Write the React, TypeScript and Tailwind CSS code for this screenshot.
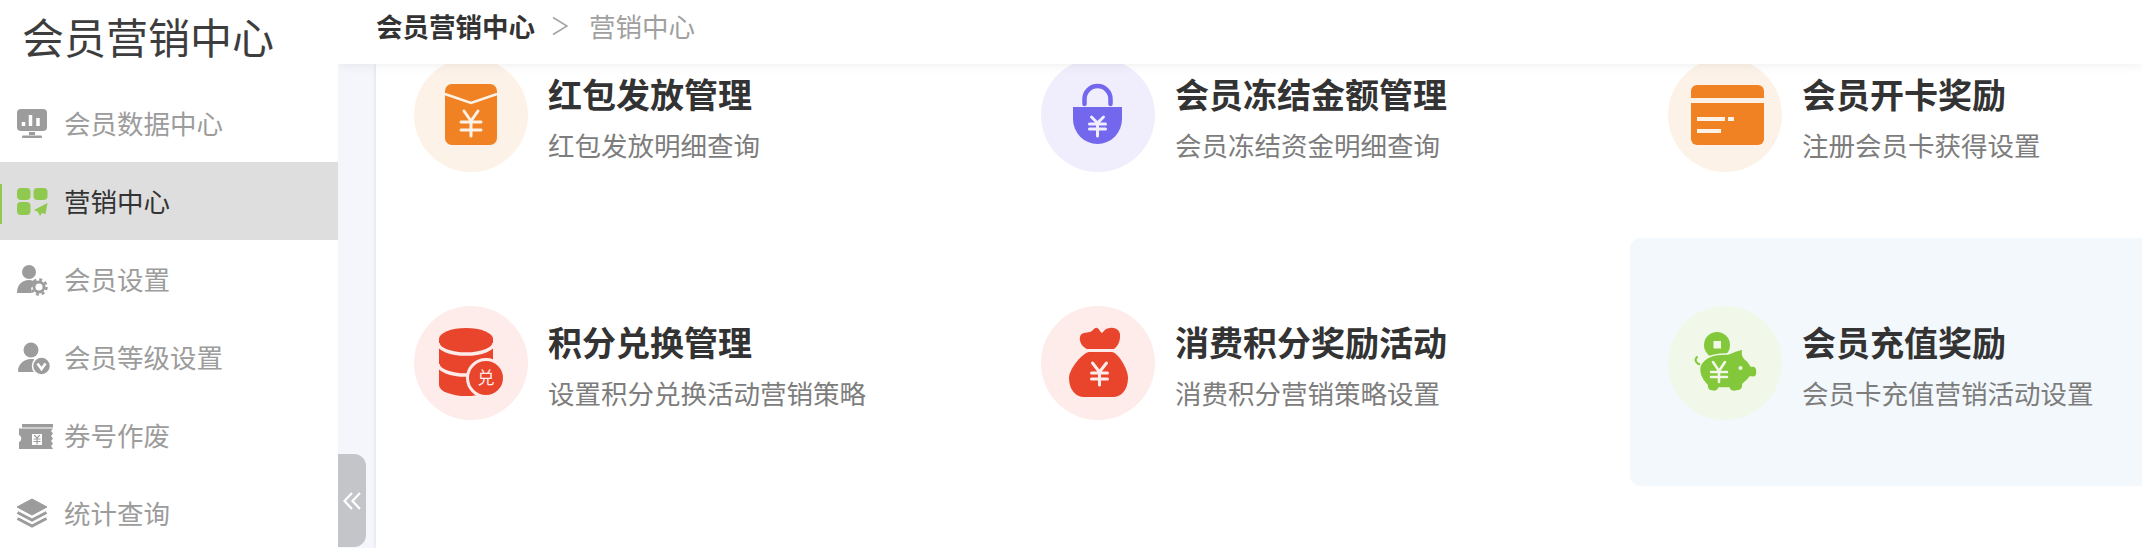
import type { ReactNode } from 'react';

const CJK = "font-['Noto_Sans_CJK_SC','Noto_Sans',sans-serif]";

interface YenProps {
	cx: number;
	top: number;
	bar1: number;
	bar2: number;
	bottom: number;
	half: number;
	arm?: number;
	color?: string;
	width?: number;
}

const Yen = ({ cx, top, bar1, bar2, bottom, half, arm = half - 1, color = '#fff', width = 3 }: YenProps) => (
	<path
		d={`M${cx - arm} ${top}L${cx} ${bar1 - 1}L${cx + arm} ${top}M${cx} ${bar1 - 1}V${bottom}M${cx - half} ${bar1}H${cx + half}M${cx - half} ${bar2}H${cx + half}`}
		fill="none"
		stroke={color}
		strokeLinecap="round"
		strokeWidth={width}
	/>
);

const IconFrame = ({ children }: { children: ReactNode }) => (
	<svg className="absolute inset-0" fill="none" height={114} viewBox="0 0 114 114" width={114}>
		{children}
	</svg>
);

const EnvelopeIcon = () => (
	<IconFrame>
		<rect fill="#f08224" height={61} rx={7} width={52} x={31} y={26} />
		<path d="M31 36L57 45L83 36" stroke="#fdf2e7" strokeWidth={2.5} />
		<Yen bar1={64} bar2={72} bottom={78} cx={57} half={10} arm={7} top={53} color="#fdf2e7" />
	</IconFrame>
);

const LockIcon = () => (
	<IconFrame>
		<path d="M43.5 46V41a13 13 0 0 1 26 0V46" stroke="#7367ee" strokeLinecap="round" strokeWidth={4.5} />
		<path d="M32 49H81V61a24.5 25 0 0 1-49 0Z" fill="#7367ee" />
		<Yen bar1={66} bar2={71} bottom={78} cx={56.5} half={8} arm={6} top={59} color="#f0eefc" />
	</IconFrame>
);

const CardIcon = () => (
	<IconFrame>
		<path d="M23 40V33a6 6 0 0 1 6-6H90a6 6 0 0 1 6 6V40Z" fill="#f08224" />
		<path d="M23 45H96V81a6 6 0 0 1-6 6H29a6 6 0 0 1-6-6Z" fill="#f08224" />
		<rect fill="#fdf2e7" height={4} width={28} x={29} y={59} />
		<rect fill="#fdf2e7" height={4} width={6} x={60} y={59} />
		<rect fill="#fdf2e7" height={4} width={24} x={29} y={71} />
	</IconFrame>
);

const DatabaseIcon = () => (
	<IconFrame>
		<path d="M25 33a27 11 0 0 1 54 0V79a27 11 0 0 1-54 0Z" fill="#e9452c" />
		<path d="M24 37A28 11 0 0 0 80 37" stroke="#feecea" strokeWidth={3.5} />
		<path d="M24 58A28 11 0 0 0 80 58" stroke="#feecea" strokeWidth={3.5} />
		<circle cx={72} cy={72} fill="#e9452c" r={18.5} stroke="#feecea" strokeWidth={3} />
		<text
			fill="#feecea"
			fontFamily="Noto Sans CJK SC, sans-serif"
			fontSize={17}
			textAnchor="middle"
			x={72}
			y={78}
		>
			兑
		</text>
	</IconFrame>
);

const MoneyBagIcon = () => (
	<IconFrame>
		<path
			d="M46 43C41 41 38 35 39 31C40 26 45 27 49 26C52 25 54 21 56 22C58 22 59 26 61 27C63 25 65 22 69 22C75 21 80 25 79 31C79 36 76 41 73 43Z"
			fill="#e9452c"
		/>
		<path
			d="M48 46H71C76 46 87 62 87 72C87 84 80 91 72 91H43C35 91 28 84 28 72C28 62 43 46 48 46Z"
			fill="#e9452c"
		/>
		<Yen bar1={67} bar2={73} bottom={79} cx={58.5} half={8} top={57} color="#feecea" />
	</IconFrame>
);

const PiggyIcon = () => (
	<IconFrame>
		<circle cx={49} cy={39} fill="#82c83a" r={13} />
		<rect fill="#f1f8ea" height={7.5} width={7.5} x={45.5} y={35} />
		<path d="M34 59C28 58 26 54 29 51" stroke="#82c83a" strokeLinecap="round" strokeWidth={2} />
		<path
			d="M33 58C37 51 47 47.5 60 48C63 47 69 44 75 43C74 47 74 50 77 53C80 55 82 58 83 60H85C88 60 89 63 89 66C89 69 88 72 84 71H82C80 74 77 76 75 78C75 83 73 85 69 85C65 86 62 85 61 82H51C50 85 47 86 44 85C41 85 39 83 39 79C34 75 29 65 33 58Z"
			fill="#82c83a"
			stroke="#f1f8ea"
			strokeWidth={1.5}
		/>
		<circle cx={72.5} cy={62} fill="#f1f8ea" r={2} />
		<Yen bar1={66} bar2={71} bottom={76} cx={51} half={8} arm={6} top={56} color="#f1f8ea" width={2.5} />
	</IconFrame>
);

const cards = [
	{ title: '红包发放管理', desc: '红包发放明细查询', bg: 'bg-[#fdf2e7]', icon: <EnvelopeIcon /> },
	{ title: '会员冻结金额管理', desc: '会员冻结资金明细查询', bg: 'bg-[#f0eefc]', icon: <LockIcon /> },
	{ title: '会员开卡奖励', desc: '注册会员卡获得设置', bg: 'bg-[#fdf2e7]', icon: <CardIcon /> },
	{ title: '积分兑换管理', desc: '设置积分兑换活动营销策略', bg: 'bg-[#feecea]', icon: <DatabaseIcon /> },
	{ title: '消费积分奖励活动', desc: '消费积分营销策略设置', bg: 'bg-[#feecea]', icon: <MoneyBagIcon /> },
	{
		title: '会员充值奖励',
		desc: '会员卡充值营销活动设置',
		bg: 'bg-[#f1f8ea]',
		icon: <PiggyIcon />,
		active: true,
	},
];

const GRAY = '#9c9c9c';

const menu: { label: string; active?: boolean; icon: ReactNode }[] = [
	{
		label: '会员数据中心',
		icon: (
			<>
				<rect fill={GRAY} height={22} rx={4} width={30} x={1} y={2} />
				<path d="M7.500 18V22M14.500 11V22M22 14V22" stroke="#fff" strokeWidth={3.500} transform="translate(0 -3)" />
				<rect fill={GRAY} height={3} width={6} x={13} y={25} />
				<rect fill={GRAY} height={2.500} rx={1} width={20} x={6} y={28.500} />
			</>
		),
	},
	{
		label: '营销中心',
		active: true,
		icon: (
			<>
				<rect fill="#8fc950" height={12} rx={4} width={13.500} x={1} y={3} />
				<rect fill="#8fc950" height={12} rx={4} width={14} x={17.500} y={3} />
				<rect fill="#8fc950" height={13} rx={4} width={13.500} x={1} y={17} />
				<path d="M31.500 18L18 25L22 27L24 31L26 28L29.500 29Z" fill="#8fc950" />
			</>
		),
	},
	{
		label: '会员设置',
		icon: (
			<>
				<circle cx={13} cy={9} fill={GRAY} r={7} />
				<path d="M1 30C1 22 6 17 13 17C16 17 18 18 20 19C16 21 14 26 16 30Z" fill={GRAY} />
				<circle cx={23} cy={24} fill="none" r={7.500} stroke={GRAY} strokeDasharray="3 2.890" strokeWidth={2.500} />
				<circle cx={23} cy={24} fill="none" r={5} stroke={GRAY} strokeWidth={2.800} />
			</>
		),
	},
	{
		label: '会员等级设置',
		icon: (
			<>
				<circle cx={15} cy={9} fill={GRAY} r={7.500} />
				<path d="M2 30C2 23 8 18 15 18C19 18 20 19 21 20L18 31H4C3 31 2 31 2 30Z" fill={GRAY} />
				<circle cx={25.500} cy={25} fill={GRAY} r={9} stroke="#fff" strokeWidth={1.500} />
				<path d="M21.500 22.500L25.500 28L29.500 22.500" fill="none" stroke="#fff" strokeWidth={2.500} />
			</>
		),
	},
	{
		label: '券号作废',
		icon: (
			<>
				<path d="M6 5H37V8.500H6Z" fill={GRAY} />
				<path d="M3 9.500H37L35 12L37 14.500L35 17L37 19.500L35 22L37 24.500L35 27L37 30H3V23C6 22 6 17 3 16Z" fill={GRAY} />
				<rect fill="#fff" height={11} width={10} x={16} y={15} />
				<Yen bar1={20} bar2={22.500} bottom={25} color={GRAY} cx={21} half={3} arm={2.500} top={16.500} width={1.200} />
			</>
		),
	},
	{
		label: '统计查询',
		icon: (
			<>
				<path d="M16 2L31 10L16 18L1 10Z" fill={GRAY} stroke={GRAY} strokeLinejoin="round" />
				<path d="M1.500 15.500L16 23L30.500 15.500" fill="none" stroke={GRAY} strokeWidth={3} />
				<path d="M1.500 21.500L16 29L30.500 21.500" fill="none" stroke={GRAY} strokeWidth={3} />
			</>
		),
	},
];

export default function App() {
	return (
		<div className={`flex h-screen w-[2142px] overflow-hidden bg-white ${CJK}`}>
			<aside className="z-20 flex w-[338px] shrink-0 flex-col bg-white">
				<h1 className="flex h-[84px] shrink-0 items-center pb-[13px] pl-[22px] text-[42px] leading-none font-normal text-[#3d3d3d]">
					会员营销中心
				</h1>
				{menu.map((item) => (
					<div
						key={item.label}
						className={`relative flex h-[78px] shrink-0 items-center gap-[10px] pl-4 text-[26.500px] ${item.active ? 'bg-[#dedede] text-[#333]' : 'text-[#9c9c9c]'}`}
					>
						{item.active && <span className="absolute top-[22px] left-0 h-10 w-0.5 bg-[#8fc950]" />}
						<svg className="shrink-0 overflow-visible" height={32} viewBox="0 0 38 32" width={38}>
							{item.icon}
						</svg>
						{item.label}
					</div>
				))}
			</aside>

			<div className="flex min-w-0 flex-1 flex-col">
				<header className="z-10 flex h-16 shrink-0 items-center gap-[17px] bg-white pb-[13px] pl-[38px] text-[26.500px] shadow-[0_2px_10px_rgba(0,0,0,0.06)]">
					<span className="font-bold text-[#333]">会员营销中心</span>
					<svg fill="none" height={20} viewBox="0 0 16 20" width={16}>
						<path d="M1 1.500L15 10L1 18.500" stroke="#a3a3a3" strokeWidth={1.500} />
					</svg>
					<span className="ml-[4px] text-[#a0a0a0]">营销中心</span>
				</header>

				<div className="flex min-h-0 flex-1">
					<div className="flex w-[38px] shrink-0 flex-col justify-end bg-[#f4f6fb] pb-px">
						<button className="flex h-[93px] w-7 items-center justify-center rounded-r-xl bg-[#c4c5c9]">
							<svg fill="none" height={18} viewBox="0 0 18 18" width={18}>
								<path d="M9 1L1.500 9L9 17M17 1L9.500 9L17 17" stroke="#fff" strokeWidth={2.200} />
							</svg>
						</button>
					</div>

					<main className="min-w-0 flex-1 overflow-hidden bg-white shadow-[-1px_0_3px_rgba(0,0,0,0.08)]">
						<div className="-mt-[74px] grid grid-cols-[627px_627px_1fr] auto-rows-[248px]">
							{cards.map((card) => (
								<div
									key={card.title}
									className={`flex items-center gap-5 pt-[2px] pl-[38px] ${card.active ? 'rounded-l-[10px] bg-[#f3f8fc]' : ''}`}
								>
									<div className={`relative size-[114px] shrink-0 rounded-full ${card.bg}`}>{card.icon}</div>
									<div className="flex flex-col gap-[18px] pt-[5px]">
										<div className="text-[34px] leading-[36px] font-bold text-[#333]">{card.title}</div>
										<div className="text-[26.500px] leading-[30px] text-[#7d7d7d]">{card.desc}</div>
									</div>
								</div>
							))}
						</div>
					</main>
				</div>
			</div>
		</div>
	);
}
